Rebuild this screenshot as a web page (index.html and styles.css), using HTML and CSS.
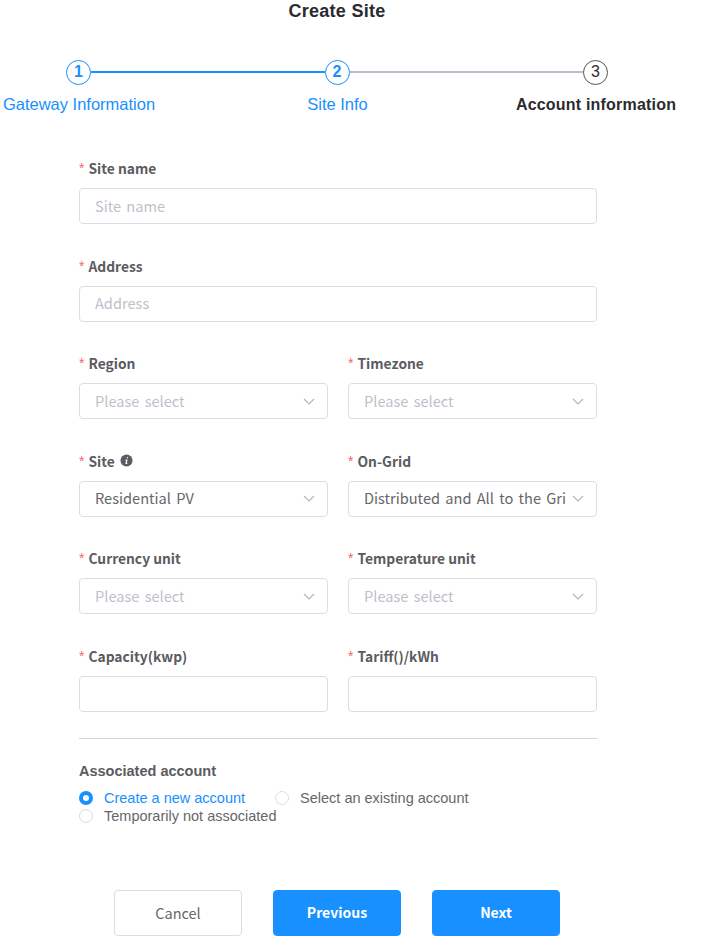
FILE: index.html
```html
<!DOCTYPE html>
<html lang="en">
<head>
    <meta charset="UTF-8">
    <title>Create Site</title>
    <link rel="stylesheet" href="styles.css">
</head>
<body>

<h1 class="page-title">Create Site</h1>

<div class="steps">
    <div class="step step-done">
        <div class="step-head"><span class="step-num">1</span><span class="step-line"></span></div>
        <div class="step-title">Gateway Information</div>
    </div>
    <div class="step step-done">
        <div class="step-head"><span class="step-num">2</span><span class="step-line"></span></div>
        <div class="step-title">Site Info</div>
    </div>
    <div class="step step-current">
        <div class="step-head"><span class="step-num">3</span></div>
        <div class="step-title">Account information</div>
    </div>
</div>

<form class="site-form">
    <div class="form-row">
        <div class="form-item">
            <label class="form-label"><span class="req">*</span>Site name</label>
            <div class="field placeholder">Site name</div>
        </div>
    </div>

    <div class="form-row">
        <div class="form-item">
            <label class="form-label"><span class="req">*</span>Address</label>
            <div class="field placeholder">Address</div>
        </div>
    </div>

    <div class="form-row">
        <div class="form-item">
            <label class="form-label"><span class="req">*</span>Region</label>
            <div class="field select placeholder"><span class="select-text">Please select</span>
                <svg class="arrow" viewBox="0 0 12 7"><path d="M1 1l5 5 5-5"/></svg></div>
        </div>
        <div class="form-item">
            <label class="form-label"><span class="req">*</span>Timezone</label>
            <div class="field select placeholder"><span class="select-text">Please select</span>
                <svg class="arrow" viewBox="0 0 12 7"><path d="M1 1l5 5 5-5"/></svg></div>
        </div>
    </div>

    <div class="form-row">
        <div class="form-item">
            <label class="form-label"><span class="req">*</span>Site
                <svg class="info" viewBox="0 0 14 14"><circle cx="7" cy="7" r="6.5"/><path d="M7.6 3.2h1.2l-.3 1.3H7.3zM6 6h2.2l-.9 4h.8l-.2.9H5.7l.9-4h-.8z"/></svg></label>
            <div class="field select"><span class="select-text">Residential PV</span>
                <svg class="arrow" viewBox="0 0 12 7"><path d="M1 1l5 5 5-5"/></svg></div>
        </div>
        <div class="form-item">
            <label class="form-label"><span class="req">*</span>On-Grid</label>
            <div class="field select"><span class="select-text">Distributed and All to the Gri</span>
                <svg class="arrow" viewBox="0 0 12 7"><path d="M1 1l5 5 5-5"/></svg></div>
        </div>
    </div>

    <div class="form-row">
        <div class="form-item">
            <label class="form-label"><span class="req">*</span>Currency unit</label>
            <div class="field select placeholder"><span class="select-text">Please select</span>
                <svg class="arrow" viewBox="0 0 12 7"><path d="M1 1l5 5 5-5"/></svg></div>
        </div>
        <div class="form-item">
            <label class="form-label"><span class="req">*</span>Temperature unit</label>
            <div class="field select placeholder"><span class="select-text">Please select</span>
                <svg class="arrow" viewBox="0 0 12 7"><path d="M1 1l5 5 5-5"/></svg></div>
        </div>
    </div>

    <div class="form-row">
        <div class="form-item">
            <label class="form-label"><span class="req">*</span>Capacity(kwp)</label>
            <div class="field"></div>
        </div>
        <div class="form-item">
            <label class="form-label"><span class="req">*</span>Tariff()/kWh</label>
            <div class="field"></div>
        </div>
    </div>

    <div class="divider"></div>

    <div class="account-title">Associated account</div>
    <div class="radio-group">
        <span class="radio radio-on"><span class="radio-dot"></span>Create a new account</span>
        <span class="radio"><span class="radio-dot"></span>Select an existing account</span>
        <span class="radio"><span class="radio-dot"></span>Temporarily not associated</span>
    </div>
</form>

<div class="button-container">
    <a class="btn">Cancel</a>
    <a class="btn btn-primary">Previous</a>
    <a class="btn btn-primary">Next</a>
</div>

</body>
</html>
```

FILE: styles.css
```css
body {
    font-family: 'Liberation Sans', Arial, sans-serif;
    background: #fff;
    margin: 0;
    height: 945px;
    overflow: hidden;
}

.page-title {
    margin: 0;
    padding-top: 1px;
    width: 674px;
    height: 58px;
    font-size: 18px;
    line-height: 20px;
    font-weight: bold;
    color: #2b2b2f;
    text-align: center;
    letter-spacing: 0.25px;
}

.steps {
    display: flex;
    margin-left: 79px;
    width: 517px;
}

.step {
    width: 258.5px;
    position: relative;
}

.step-current {
    width: 0;
}

.step-head {
    display: flex;
    align-items: center;
    height: 26px;
    margin: 0 13px 0 -13px;
}

.step-current .step-head {
    margin-right: 0;
}

.step-num {
    flex: none;
    box-sizing: border-box;
    width: 25px;
    height: 25px;
    border: 1.5px solid #1890ff;
    border-radius: 50%;
    font-size: 16px;
    line-height: 22px;
    font-weight: bold;
    text-align: center;
    color: #1890ff;
}

.step-current .step-num {
    border-color: #55555a;
    color: #2b2b2f;
    font-weight: normal;
}

.step-line {
    flex: 1;
    height: 2px;
    background: #1890ff;
}

.step:nth-child(2) .step-line {
    background: #bdbdc9;
}

.step-title {
    position: absolute;
    top: 35px;
    left: -90px;
    width: 180px;
    font-size: 16.5px;
    line-height: 20px;
    color: #1890ff;
    text-align: center;
    white-space: nowrap;
}

.step-current .step-title {
    top: 36px;
    font-size: 16px;
    color: #2b2b2f;
    font-weight: bold;
    letter-spacing: 0.2px;
}

.site-form {
    width: 518px;
    margin: 0 0 0 79px;
    padding-top: 73px;
    font-family: 'Noto Sans CJK SC', 'Noto Sans', sans-serif;
}

.form-row {
    display: flex;
    gap: 20px;
    height: 97.6px;
}

.form-item {
    flex: 1;
    min-width: 0;
}

.form-label {
    display: flex;
    align-items: center;
    height: 20px;
    font-size: 13.8px;
    font-weight: 700;
    color: #5b5b60;
    margin-bottom: 10px;
}

.req {
    color: #f5646c;
    font-size: 14px;
    font-weight: normal;
    margin-right: 4px;
    font-family: 'Liberation Sans', Arial, sans-serif;
}

.info {
    width: 13px;
    height: 13px;
    margin-left: 5px;
}

.info circle {
    fill: #5b5b60;
}

.info path {
    fill: #fff;
}

.field {
    box-sizing: border-box;
    height: 36px;
    border: 1px solid #dcdce6;
    border-radius: 4px;
    padding: 0 15px 1px;
    font-size: 14.6px;
    word-spacing: 2px;
    line-height: 32px;
    color: #66666b;
    display: flex;
    align-items: center;
    background: #fff;
}

.placeholder {
    color: #bfbfcb;
}

.select {
    padding-right: 12px;
}

.select-text {
    flex: 1;
    min-width: 0;
    overflow: hidden;
    white-space: nowrap;
}

.arrow {
    flex: none;
    width: 12px;
    height: 7px;
    margin: 1px 0 0 6px;
    fill: none;
    stroke: #b4b4be;
    stroke-width: 1.1;
}

.divider {
    height: 1px;
    background: #d6d6da;
    margin-top: -6px;
}

.account-title {
    margin-top: 24px;
    font-family: 'Liberation Sans', Arial, sans-serif;
    font-size: 14.5px;
    line-height: 16px;
    font-weight: bold;
    color: #5b5b60;
}

.radio-group {
    display: flex;
    flex-wrap: wrap;
    margin-top: 11px;
    width: 420px;
    font-family: 'Liberation Sans', Arial, sans-serif;
    font-size: 14.5px;
    color: #66666b;
}

.radio {
    display: flex;
    align-items: center;
    height: 17.5px;
    margin-right: 30px;
    white-space: nowrap;
}

.radio-dot {
    box-sizing: border-box;
    width: 14px;
    height: 14px;
    margin-right: 11px;
    border: 1px solid #dcdce6;
    border-radius: 50%;
    background: #fff;
}

.radio-on {
    color: #1890ff;
}

.radio-on .radio-dot {
    border: 4px solid #1890ff;
}

.button-container {
    display: flex;
    gap: 31px;
    margin: 65px 0 0 114px;
}

.btn {
    box-sizing: border-box;
    width: 128px;
    height: 46px;
    border: 1px solid #dcdce6;
    border-radius: 4px;
    font-family: 'Noto Sans CJK SC', 'Noto Sans', sans-serif;
    font-size: 14.5px;
    line-height: 43px;
    text-align: center;
    color: #66666b;
    background: #fff;
}

.btn-primary {
    background: #1890ff;
    border-color: #1890ff;
    color: #fff;
    font-size: 14px;
    font-weight: 700;
}
```
